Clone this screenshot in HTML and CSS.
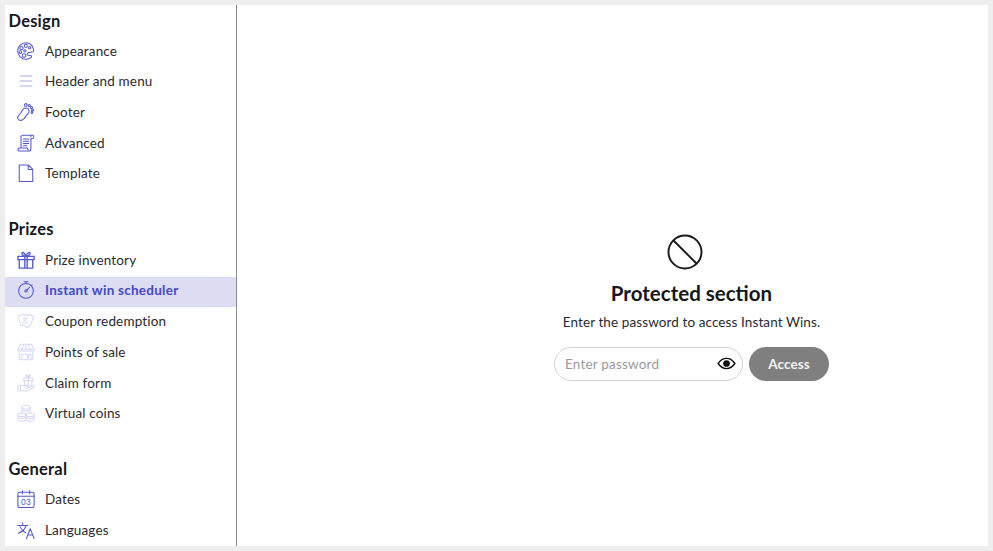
FILE: index.html
```html
<!DOCTYPE html>
<html lang="en">
<head>
<meta charset="utf-8">
<title>Protected section</title>
<link rel="stylesheet" href="styles.css">
</head>
<body>
<div class="app">
  <aside class="sidebar">
    <h2 class="group-title">Design</h2>
    <ul class="menu">
      <li class="item"><svg class="icon" viewBox="0 0 20 20"><path d="M10 .8a9.200 9.200 0 1 0 0 18.400c2.200 0 4.200-.7 5.700-2 1-.9.400-2-.8-2.200-1.500-.2-3 .2-3.500-.9-.5-1.200.8-2.200 2.200-2.500 1.500-.3 3-.1 4.300-.9 1-.7.800-2 .3-3.100A9.200 9.200 0 0 0 10 .8Z"/><circle cx="9.800" cy="4.300" r="1.700"/><circle cx="5" cy="6.700" r="1.800"/><circle cx="14" cy="6.300" r="1.300"/><circle cx="3.800" cy="11.200" r="1.500"/><circle cx="7.800" cy="15" r="1.900"/><circle cx="8.800" cy="9.800" r="1.300"/></svg><span>Appearance</span></li>
      <li class="item"><svg class="icon faint" viewBox="0 0 20 20"><path d="M3.500 4.500h13M3.500 10h13M3.500 15.500h13"/></svg><span>Header and menu</span></li>
      <li class="item"><svg class="icon" viewBox="0 0 20 20"><path d="M3.800 19.300c-2 0-3.400-1.500-3-3.500.4-2 2.400-3 3.400-4.800 1-1.900 1.800-4.300 4-5.200 2.200-.9 4.300.1 5 2 .7 1.800-.3 3.500-1.700 4.800-1.600 1.500-2.300 3.300-3.600 4.800-1.200 1.200-2.500 1.900-4.100 1.900Z"/><circle cx="9.800" cy="2.200" r="1.500"/><circle cx="13.600" cy="2.800" r="1.200"/><circle cx="16" cy="5" r="1.200"/><circle cx="17.300" cy="7.800" r="1.100"/><circle cx="16.600" cy="10.600" r="1"/></svg><span>Footer</span></li>
      <li class="item"><svg class="icon" viewBox="0 0 20 20"><path d="M4.500 15.500V3.500c0-1 .8-2 2-2h10.500c1 0 1.700.8 1.700 1.700s-.7 1.800-1.700 1.800h-1.500v11c0 1.500-1 3-2.500 3H3c-1.200 0-2-.8-2-1.700s.6-1.800 1.800-1.800h8.700c0 1 .4 1.500 1 2M15.500 3c0-.8-.5-1.500-1-1.500M7 5.500h6M7 8h6M7 10.500h6M7 13h4"/></svg><span>Advanced</span></li>
      <li class="item"><svg class="icon" viewBox="0 0 20 20"><path d="M2.500 1h10L17.500 6v13.500h-15ZM12.500 1v5h5"/></svg><span>Template</span></li>
    </ul>
    <h2 class="group-title">Prizes</h2>
    <ul class="menu">
      <li class="item"><svg class="icon bold" viewBox="0 0 20 20"><path d="M1 6h18v3.500H1ZM2.500 9.500V19h15V9.500M8.700 6v13M11.300 6v13M10 6C8 5.500 5.500 4.500 5.500 2.800S8 .5 10 6c2-5.500 4.500-4.900 4.500-3.200S12 5.500 10 6Z"/></svg><span>Prize inventory</span></li>
      <li class="item active"><svg class="icon" viewBox="0 0 20 20"><circle cx="10" cy="11" r="8.200"/><path d="M10 2.800V1M8 .8h4M15.800 5.200l1-1"/><circle cx="10" cy="11" r="1.300"/><path d="m10.900 10.100 3-3"/></svg><span>Instant win scheduler</span></li>
      <li class="item"><svg class="icon ghost" viewBox="0 0 20 20"><path d="M1.500 4.500 7 2.500l1.500 1.500L10 2l3 2 1-1.500 4.500 3-4 10-3 2-4-3-3.500.5ZM7 8l3-2M6 12l5-5M9 13l3-3"/></svg><span>Coupon redemption</span></li>
      <li class="item"><svg class="icon ghost" viewBox="0 0 20 20"><path d="M4 1.500h12l3 5.500H1ZM1 7c0 1.500 1 2.500 2.250 2.500S5.500 8.500 5.500 7c0 1.500 1 2.500 2.250 2.500S10 8.500 10 7c0 1.500 1 2.500 2.250 2.500S14.500 8.500 14.500 7c0 1.500 1 2.500 2.250 2.500S19 8.500 19 7M2.500 9.500V18.500h15V9.500M5.500 12.500h6v6h-6ZM13 12.500h2.500v6H13ZM7.500 1.500 5.500 7M12.500 1.500 14.500 7M10 1.500V7"/></svg><span>Points of sale</span></li>
      <li class="item"><svg class="icon ghost" viewBox="0 0 20 20"><path d="M7.500 4.500h10v3h-10ZM8.500 7.500v5h8v-5M12.500 4.500v8M12.500 4.500C11 3 9.500 2 10 1s2-.5 2.500 3.500C13 .5 14.500 0 15 1s-1 2-2.500 3.500ZM1 12.500h3v6.500H1ZM4 13.500c2-1 3.500-1 5.500 0h3c1.200 0 1.200 2 0 2H9M12.500 15l5-1.500c1.500-.3 2 1.200 1 1.800L12 18.500c-2.500 1-5 .3-8 0"/></svg><span>Claim form</span></li>
      <li class="item"><svg class="icon ghost" viewBox="0 0 20 20"><ellipse cx="10" cy="3.500" rx="4.500" ry="2"/><path d="M5.500 3.500v6.500M14.500 3.500v6.500M5.500 6.500c1 1.500 8 1.500 9 0"/><ellipse cx="5.500" cy="12" rx="4.500" ry="2"/><path d="M1 12v5c0 2.700 9 2.700 9 0v-5M1 14.500c1 2 8 2 9 0"/><ellipse cx="14.500" cy="12" rx="4.500" ry="2"/><path d="M10 14.500c1 2 8 2 9 0M10 17c0 2.700 9 2.700 9 0M19 12v5"/></svg><span>Virtual coins</span></li>
    </ul>
    <h2 class="group-title">General</h2>
    <ul class="menu">
      <li class="item"><svg class="icon" viewBox="0 0 20 20"><rect x="1" y="2.500" width="18" height="17" rx="2"/><path d="M1 7h18M6 .8v3.500M14 .8v3.500"/><text class="date-num" x="10" y="17">03</text></svg><span>Dates</span></li>
      <li class="item"><svg class="icon" viewBox="0 0 20 20"><path d="M.8 5h11M6.300 2V5M10 5c-1 4-4 7-8.500 8.500M3.500 6.500c1 2.500 3 5 6 6.500M10.500 19.500l4.200-11 4.300 11M12 15.500h5.500"/></svg><span>Languages</span></li>
    </ul>
  </aside>
  <main class="content">
    <svg class="ban" viewBox="0 0 36 36"><circle cx="18" cy="18" r="16.500"/><path d="m6.500 6.500 23 23"/></svg>
    <h1 class="title">Protected section</h1>
    <p class="lead">Enter the password to access Instant Wins.</p>
    <form class="form">
      <div class="field">
        <input class="input" type="text" placeholder="Enter password">
        <svg class="eye" viewBox="0 0 20 14"><path class="eye-line" d="M1 7c2.500-3.800 5.500-5.500 9-5.500S16.500 3.200 19 7c-2.500 3.800-5.500 5.500-9 5.500S3.500 10.800 1 7Z"/><circle class="eye-dot" cx="10" cy="7" r="3.600"/></svg>
      </div>
      <button class="button" type="button">Access</button>
    </form>
  </main>
</div>
</body>
</html>
```
FILE: styles.css
```css
* { box-sizing: border-box; }
html, body { height: 100%; }
body {
  margin: 0;
  padding: 5px;
  background: #eeeeee;
  overflow: hidden;
  font-family: "Lato", "Noto Sans", sans-serif;
  color: #1d1d22;
}
.app {
  display: flex;
  height: 541px;
  background: #ffffff;
  overflow: hidden;
}
.sidebar {
  flex: 0 0 232px;
  border-right: 1px solid #8a8a8a;
  overflow: hidden;
}
.group-title {
  margin: 0;
  padding: 6px 0 0 3.500px;
  height: 32.500px;
  font-size: 16.500px;
  line-height: 20px;
  font-weight: 700;
  letter-spacing: .2px;
  color: #17171c;
}
.group-title:first-child { height: 31.800px; }
.menu {
  list-style: none;
  margin: 0 0 22.500px;
  padding: 0;
}
.group-title:first-child + .menu { margin-bottom: 23.200px; }
.item {
  display: flex;
  align-items: center;
  gap: 10px;
  height: 30.700px;
  padding: 0 0 3px 12px;
  font-size: 13.500px;
  letter-spacing: .15px;
  color: #2a2a30;
}
.item.active {
  background: #dcdcf3;
  color: #4349c9;
  font-weight: 700;
  letter-spacing: .25px;
}
.icon {
  flex: none;
  width: 18px;
  height: 18px;
  fill: none;
  stroke: #5257d6;
  stroke-width: 1.150;
  stroke-linecap: round;
  stroke-linejoin: round;
}
.icon.bold { stroke-width: 1.500; }
.icon.faint { stroke: #c8c9f1; stroke-width: 1.600; }
.icon.ghost { stroke: #d9d9f5; }
.date-num {
  fill: #5257d6;
  stroke: none;
  font-family: "Liberation Sans", sans-serif;
  font-size: 9.500px;
  text-anchor: middle;
}
.content {
  flex: 1;
  display: flex;
  flex-direction: column;
  align-items: center;
  padding: 229px 0 0 158px;
}
.ban {
  width: 36px;
  height: 36px;
  margin-right: 14px;
  fill: none;
  stroke: #17171c;
  stroke-width: 1.900;
}
.title {
  margin: 10.500px 0 0;
  font-size: 20.500px;
  line-height: 24px;
  font-weight: 700;
  color: #17171c;
}
.lead {
  margin: 8.500px 0 0;
  font-size: 13.500px;
  line-height: 18px;
  letter-spacing: .1px;
  color: #2a2a30;
}
.form {
  display: flex;
  gap: 6px;
  margin-top: 16px;
}
.field {
  display: flex;
  align-items: center;
  width: 189px;
  height: 34px;
  padding: 0 6px 0 10px;
  border: 1px solid #d2d2d2;
  border-radius: 17px;
}
.input {
  flex: 1;
  min-width: 0;
  border: 0;
  outline: 0;
  padding: 0 0 1px;
  background: transparent;
  font: 400 13.500px "Lato", "Noto Sans", sans-serif;
  letter-spacing: .2px;
  color: #2a2a30;
}
.input::placeholder { color: #9a9a9a; opacity: 1; }
.eye { flex: none; width: 19px; height: 13px; margin-bottom: 1px; }
.eye-line { fill: none; stroke: #111111; stroke-width: 1.500; }
.eye-dot { fill: #111111; }
.button {
  width: 80px;
  height: 34px;
  border: 0;
  border-radius: 17px;
  background: #7f7f7f;
  color: #f2f2f2;
  font: 700 13.500px "Lato", "Noto Sans", sans-serif;
  letter-spacing: .1px;
}
```
